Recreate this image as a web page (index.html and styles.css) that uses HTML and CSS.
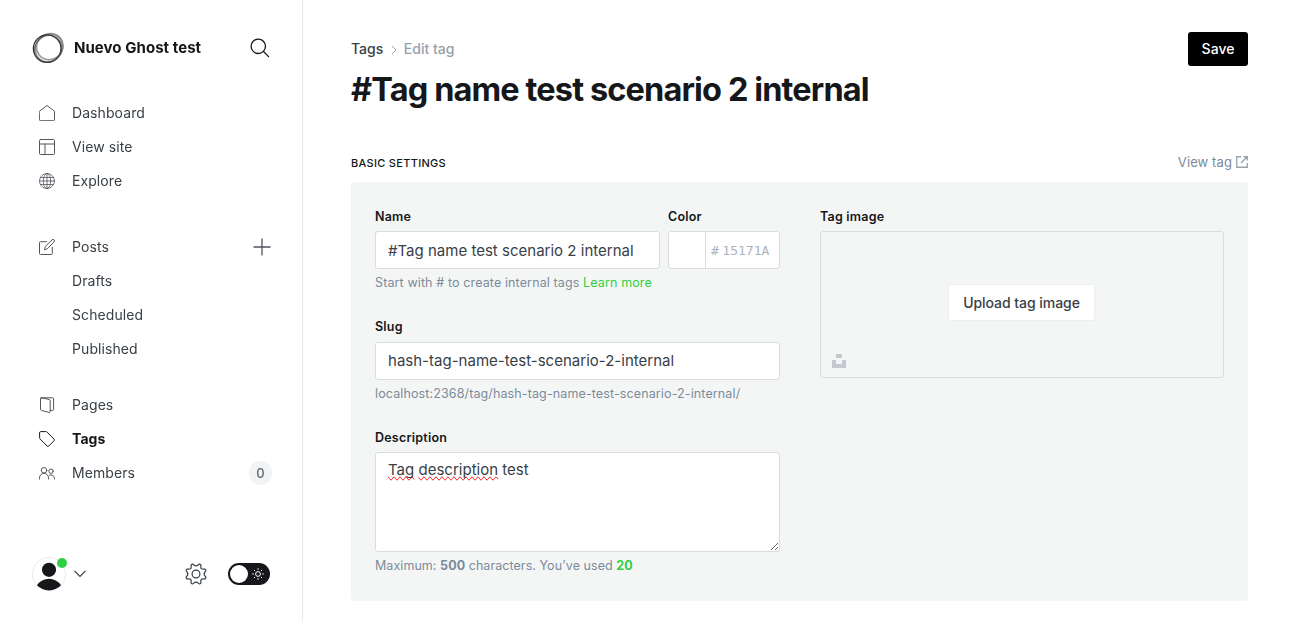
FILE: index.html
```html
<!DOCTYPE html>
<html lang="en">
<head>
<meta charset="utf-8">
<title>Tags - Nuevo Ghost test</title>
<link rel="stylesheet" href="styles.css">
</head>
<body>
<div class="app">
  <nav class="sidebar">
    <header class="site">
      <svg class="site-logo" viewBox="0 0 32 32" fill="none">
        <ellipse cx="17.800" cy="14.600" rx="13.600" ry="12.800" stroke="#999" stroke-width="1.600" transform="rotate(-40 17.800 14.600)"/>
        <ellipse cx="17" cy="16" rx="13" ry="14.500" stroke="#8a8a8a" stroke-width="1.500" transform="rotate(40 17 16)"/>
        <circle cx="15.200" cy="16.600" r="13.800" stroke="#2b2b2b" stroke-width="1.300"/>
        <ellipse cx="16" cy="17" rx="14.300" ry="12.900" stroke="#444" stroke-opacity=".7" stroke-width="1" transform="rotate(-40 16 17)"/>
      </svg>
      <span class="site-name">Nuevo Ghost test</span>
      <svg class="search-icon" viewBox="0 0 20 20" fill="none" stroke="#15171a" stroke-width="1.300" stroke-linecap="round"><circle cx="8.300" cy="8.300" r="7.200"/><path d="M13.500 13.500 18.600 18.600"/></svg>
    </header>

    <ul class="nav-list">
      <li class="nav-item"><svg class="nav-icon" viewBox="0 0 16 16"><path d="M.5 6.200 8 .5l7.500 5.700v8.600a.9.9 0 0 1-.9.900H1.400a.9.9 0 0 1-.9-.9z"/></svg><span class="nav-label">Dashboard</span></li>
      <li class="nav-item"><svg class="nav-icon" viewBox="0 0 16 16"><rect x=".5" y=".5" width="15" height="15" rx="1"/><path d="M.5 5h15M6 5v10.500"/></svg><span class="nav-label">View site</span></li>
      <li class="nav-item"><svg class="nav-icon thin" viewBox="0 0 16 16"><circle cx="8" cy="8" r="7.500"/><ellipse cx="8" cy="8" rx="3.700" ry="7.500"/><path d="M.5 8h15M1.500 4.500h13M1.500 11.500h13M8 .5v15"/></svg><span class="nav-label">Explore</span></li>
    </ul>

    <ul class="nav-list">
      <li class="nav-item"><svg class="nav-icon" viewBox="0 0 16 16"><path d="M7.500 2.700H1.400a.9.9 0 0 0-.9.9v11a.9.9 0 0 0 .9.9h11a.9.9 0 0 0 .9-.9V8.200M5.600 10.400l.7-2.900L13 .9a1.350 1.350 0 0 1 2 2L8.500 9.600z"/></svg><span class="nav-label">Posts</span>
        <svg class="plus-icon" viewBox="0 0 18 18"><path d="M9 .5v17M.5 9h17"/></svg></li>
      <li class="nav-item nav-sub"><span class="nav-label">Drafts</span></li>
      <li class="nav-item nav-sub"><span class="nav-label">Scheduled</span></li>
      <li class="nav-item nav-sub"><span class="nav-label">Published</span></li>
    </ul>

    <ul class="nav-list">
      <li class="nav-item"><svg class="nav-icon" viewBox="0 0 16 16"><path d="M2.300.8h11.400a.9.9 0 0 1 .9.9v10.800a.9.9 0 0 1-.9.9h-2.500M2.300.8l7.900 1.700a1.200 1.200 0 0 1 1 1.200v10.700a1 1 0 0 1-1.300 1l-7.500-2a1.200 1.200 0 0 1-.9-1.200V1.500a.7.7 0 0 1 .8-.7z"/></svg><span class="nav-label">Pages</span></li>
      <li class="nav-item nav-active"><svg class="nav-icon" viewBox="0 0 16 16"><path d="M.6 1.600a1 1 0 0 1 1-1h5.200a2 2 0 0 1 1.400.6l6.900 7a1.100 1.100 0 0 1 0 1.500l-5.400 5.400a1.100 1.100 0 0 1-1.500 0L1.200 8.200a2 2 0 0 1-.6-1.400z"/></svg><span class="nav-label">Tags</span></li>
      <li class="nav-item"><svg class="nav-icon" viewBox="0 0 16 16"><circle cx="5" cy="5.300" r="2.800"/><path d="M.5 14v-1.200a4.500 4.500 0 0 1 9 0V14"/><circle cx="12" cy="6.200" r="2.200"/><path d="M10.500 10.100a3.600 3.600 0 0 1 5 3.300v.6"/></svg><span class="nav-label">Members</span>
        <span class="badge">0</span></li>
    </ul>

    <footer class="user-bar">
      <div class="avatar">
        <svg class="avatar-image" viewBox="0 0 34 34"><circle cx="17" cy="17" r="16.500" fill="#fff" stroke="#e9eaec"/><circle cx="17" cy="12.800" r="7.100" fill="#15171a"/><path d="M5 28.200a14.500 14.500 0 0 1 24 0A16.500 16.500 0 0 1 5 28.200z" fill="#15171a"/></svg>
        <span class="status-dot"></span>
      </div>
      <svg class="chevron" viewBox="0 0 12 8"><path d="M.6 1 6 6.500 11.400 1"/></svg>
      <svg class="gear" viewBox="-11 -11 22 22"><circle r="3.900"/><path d="M-2.10 -9.00 Q0 -7.300 2.10 -9.00 Q3.400 -10.700 4.880 -9.100 Q4.600 -6.900 5.200 -5.200 Q6.900 -4.600 9.100 -4.880 Q10.700 -3.400 9.000 -2.100 Q7.300 0 9.000 2.100 Q10.700 3.400 9.100 4.880 Q6.900 4.600 5.200 5.200 Q4.600 6.900 4.880 9.100 Q3.400 10.700 2.100 9.000 Q0 7.300 -2.100 9.000 Q-3.400 10.700 -4.880 9.100 Q-4.600 6.900 -5.200 5.200 Q-6.900 4.600 -9.100 4.880 Q-10.700 3.400 -9.000 2.100 Q-7.300 0 -9.000 -2.100 Q-10.700 -3.400 -9.100 -4.880 Q-6.900 -4.600 -5.200 -5.200 Q-4.600 -6.900 -4.880 -9.100 Q-3.400 -10.700 -2.100 -9.000z"/></svg>
      <div class="toggle"><span class="knob"></span><svg class="sun" viewBox="-6 -6 12 12"><circle r="2.400"/><path d="M0-5.700v1.500M0 4.200v1.500M-5.700 0h1.500M4.200 0h1.500M-4-4l1 1M3 3l1 1M-4 4l1-1M3-3l1-1"/></svg></div>
    </footer>
  </nav>

  <main class="main">
    <header class="page-head">
      <div>
        <div class="crumbs"><span class="crumb-link">Tags</span><svg class="crumb-arrow" viewBox="0 0 6 10"><path d="M.8.8 5 5 .8 9.200"/></svg><span>Edit tag</span></div>
        <h1 class="title">#Tag name test scenario 2 internal</h1>
      </div>
      <button class="save" type="button">Save</button>
    </header>

    <div class="section-head">
      <h2 class="section-title">Basic settings</h2>
      <a class="view-tag">View tag<svg class="external" viewBox="0 0 12 12"><path d="M5 .75H.75v10.500h10.500V7M7.500.75h3.750V4.500M11 1 5 7"/></svg></a>
    </div>

    <section class="panel">
      <div class="fields">
        <div class="name-row">
          <div class="field name-field">
            <div class="label">Name</div>
            <div class="input name-input">#Tag name test scenario 2 internal</div>
            <p class="hint">Start with # to create internal tags <a class="learn">Learn more</a></p>
          </div>
          <div class="field color-field">
            <div class="label">Color</div>
            <div class="input name-input color-input"><span class="swatch"></span><span class="hash">#</span><span class="hex">15171A</span></div>
          </div>
        </div>
        <div class="field">
          <div class="label slug-label">Slug</div>
          <div class="input">hash-tag-name-test-scenario-2-internal</div>
          <p class="hint">localhost:2368/tag/hash-tag-name-test-scenario-2-internal/</p>
        </div>
        <div class="field">
          <div class="label">Description</div>
          <div class="textarea"><span class="misspelled">Tag</span> <span class="misspelled">description</span> test</div>
          <p class="hint count-hint">Maximum: <b>500</b> characters. You’ve used <b class="used">20</b></p>
        </div>
      </div>
      <div class="image-field">
        <div class="label">Tag image</div>
        <div class="uploader">
          <button class="upload" type="button">Upload tag image</button>
          <svg class="unsplash" viewBox="0 0 14 14"><path d="M4 0h6v4H4zM0 6h4v4h6V6h4v8H0z" fill="#c5c8ce"/></svg>
        </div>
      </div>
    </section>
  </main>
</div>
</body>
</html>
```
FILE: styles.css
```css
* { box-sizing: border-box; }
body { margin: 0; background: #fff; color: #15171a; font-family: Inter, "Liberation Sans", sans-serif; font-size: 15px; letter-spacing: 0; }
h1, h2, p, ul { margin: 0; padding: 0; }
ul { list-style: none; }
svg { display: block; flex: none; }
button { font-family: inherit; letter-spacing: inherit; }

.app { display: flex; height: 621px; overflow: hidden; }

.sidebar { display: flex; flex-direction: column; width: 303px; flex: none; border-right: 1px solid #e6e8ea; padding: 32px 31px 0 32px; will-change: transform; }
.site { display: flex; align-items: center; height: 32px; margin-bottom: 32px; }
.site-logo { width: 32px; height: 32px; }
.site-name { margin-left: 10px; padding-bottom: 1px; font-size: 15px; font-weight: 700; letter-spacing: .05px; }
.search-icon { width: 20px; height: 20px; margin: 0 1px 0 auto; }

.nav-list { margin-bottom: 32px; }
.nav-list:nth-of-type(2) { margin-bottom: 22px; }
.nav-item { display: flex; align-items: center; height: 34px; padding-left: 7px; font-size: 14px; letter-spacing: .08px; color: #394047; }
.nav-label { padding-bottom: 1px; }
.nav-icon { width: 16px; height: 16px; margin-right: 17px; fill: none; stroke: #50565e; stroke-width: 1; stroke-linejoin: round; stroke-linecap: round; }
.thin { stroke-width: .8; }
.nav-sub { padding-left: 40px; }
.nav-active { font-weight: 700; color: #15171a; }
.nav-active .nav-icon { stroke: #15171a; }
.plus-icon { width: 18px; height: 18px; margin-left: auto; fill: none; stroke: #50565e; stroke-width: 1.300; }
.badge { display: grid; place-items: center; width: 23px; height: 24px; margin: 0 -1px 0 auto; border-radius: 12px; background: #f1f3f4; font-size: 13px; font-weight: 500; color: #5d6875; }

.user-bar { display: flex; align-items: center; height: 34px; margin-top: 35px; }
.avatar { position: relative; width: 34px; height: 34px; }
.avatar-image { width: 34px; height: 34px; }
.status-dot { position: absolute; top: 1px; right: -1px; width: 10px; height: 10px; border-radius: 50%; background: #30cf43; }
.chevron { width: 12px; height: 8px; margin-left: 8px; fill: none; stroke: #394047; stroke-width: 1.100; }
.gear { width: 22px; height: 22px; margin-left: auto; fill: none; stroke: #394047; stroke-width: 1.200; }
.toggle { display: flex; align-items: center; justify-content: space-between; width: 42px; height: 22px; margin: 0 1px 0 21px; padding: 0 6px 0 2px; border-radius: 11px; background: #15171a; }
.knob { width: 18px; height: 18px; border-radius: 50%; background: #fff; }
.sun { width: 12px; height: 12px; fill: none; stroke: #fff; stroke-width: 1; }

.main { flex: 1; padding: 32px 48px 0; }
.page-head { display: flex; justify-content: space-between; align-items: flex-start; height: 121px; }
.crumbs { display: flex; align-items: center; height: 34px; padding-bottom: 1px; font-size: 14px; font-weight: 500; color: #95a1ad; }
.crumb-link { color: #394047; }
.crumb-arrow { width: 6px; height: 10px; margin: 2px 7px 0 7.500px; fill: none; stroke: #95a1ad; stroke-width: 1; }
.title { margin-top: 3px; font-size: 32.500px; line-height: 41px; font-weight: 700; letter-spacing: -.87px; white-space: nowrap; }
.save { width: 60px; height: 34px; padding: 0 0 1px; border: 0; border-radius: 3px; background: #000; color: #fff; font-size: 14px; font-weight: 500; }

.section-head { display: flex; align-items: center; justify-content: space-between; height: 20px; margin-bottom: 9px; }
.section-title { font-size: 11px; font-weight: 500; text-transform: uppercase; letter-spacing: .3px; }
.view-tag { display: flex; align-items: center; gap: 4px; padding-bottom: 2px; font-size: 13px; letter-spacing: .1px; color: #7c8b9a; }
.external { width: 12px; height: 12px; fill: none; stroke: #95a1ad; stroke-width: 1.300; }

.panel { display: flex; gap: 40px; height: 419px; padding: 24px; border-radius: 3px; background: #f4f6f6; }
.fields { display: flex; flex-direction: column; gap: 24px; width: 405px; flex: none; }
.name-row { display: flex; gap: 8px; }
.name-field { width: 285px; }
.color-field { width: 112px; }
.label { height: 25px; line-height: 21px; font-size: 12.500px; font-weight: 600; letter-spacing: .22px; color: #15171a; }
.slug-label { line-height: 20px; }
.input, .textarea { border: 1px solid #dadddf; border-radius: 3px; background: #fff; padding: 0 12px; color: #394047; font-size: 15px; letter-spacing: 0.01px; white-space: nowrap; }
.input { height: 38px; line-height: 36px; }
.name-input { line-height: 38px; }
.hint { height: 23.500px; padding-top: 5px; line-height: 18px; font-size: 12.500px; letter-spacing: .12px; color: #7c8b9a; white-space: nowrap; }
.count-hint { letter-spacing: .06px; }
.learn, .used { color: #30cf43; }
.color-input { display: flex; padding: 0; font-family: "DejaVu Sans Mono", monospace; font-size: 13px; color: #abb4be; }
.swatch { width: 37px; border-right: 1px solid #dadddf; }
.hash { margin-left: 5px; }
.hex { margin-left: 3.500px; }
.textarea { position: relative; height: 100px; padding-top: 6px; line-height: 22px; resize: vertical; overflow: hidden; }
.misspelled { text-decoration: underline wavy #f00 1px; text-decoration-skip-ink: none; text-decoration-line: spelling-error; }

.image-field { flex: 1; }
.uploader { position: relative; display: flex; align-items: center; justify-content: center; height: 147px; border: 1px solid #dadddf; border-radius: 3px; }
.upload { width: 147px; height: 37px; margin: -4px 1px 0 0; padding: 0 0 1px; border: 1px solid #eceeef; border-radius: 3px; background: #fff; color: #394047; font-size: 14px; font-weight: 500; letter-spacing: -.05px; }
.unsplash { position: absolute; left: 11px; bottom: 9px; width: 14px; height: 14px; }
```
